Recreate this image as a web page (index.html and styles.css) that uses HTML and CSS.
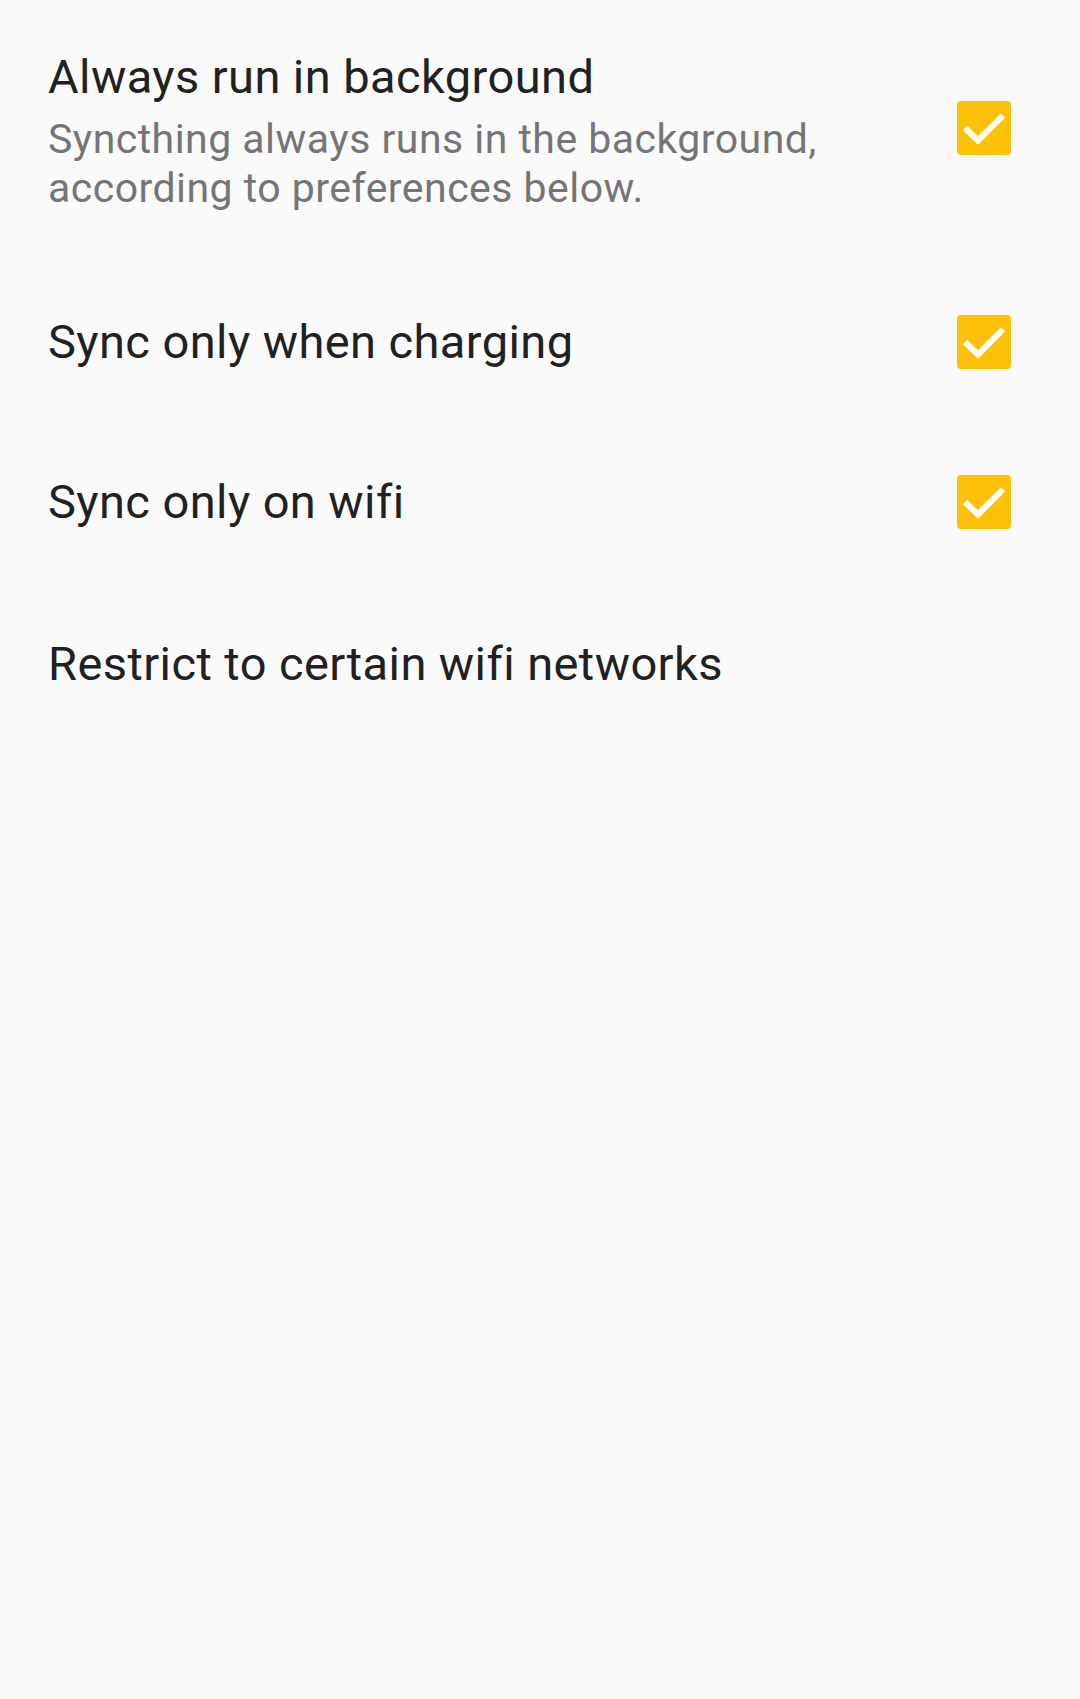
FILE: index.html
```html
<!DOCTYPE html>
<html lang="en">
<head>
<meta charset="utf-8">
<title>Run conditions</title>
<link rel="stylesheet" href="styles.css">
</head>
<body>
<div class="list">
  <div class="row row-first">
    <div class="text">
      <div class="title">Always run in background</div>
      <div class="summary">Syncthing always runs in the background,<br>according to preferences below.</div>
    </div>
    <div class="check check-first">
      <svg viewBox="0 0 54 54" width="54" height="54"><polyline points="8,27 21,39.5 46,14.5" fill="none" stroke="#fff" stroke-width="6"/></svg>
    </div>
  </div>
  <div class="row">
    <div class="text"><div class="title">Sync only when charging</div></div>
    <div class="check">
      <svg viewBox="0 0 54 54" width="54" height="54"><polyline points="8,27 21,39.5 46,14.5" fill="none" stroke="#fff" stroke-width="6"/></svg>
    </div>
  </div>
  <div class="row">
    <div class="text"><div class="title">Sync only on wifi</div></div>
    <div class="check">
      <svg viewBox="0 0 54 54" width="54" height="54"><polyline points="8,27 21,39.5 46,14.5" fill="none" stroke="#fff" stroke-width="6"/></svg>
    </div>
  </div>
  <div class="row row-last">
    <div class="text"><div class="title">Restrict to certain wifi networks</div></div>
  </div>
</div>
</body>
</html>
```
FILE: styles.css
```css
html, body {
  margin: 0;
  padding: 0;
  background: #fafafa;
}
body {
  width: 1080px;
  height: 1699px;
  font-family: Roboto, "Noto Sans", "Liberation Sans", sans-serif;
}
.list {
  display: flex;
  flex-direction: column;
}
.row {
  display: flex;
  align-items: center;
  padding: 52px 69px 52px 48px;
}
.row-first {
  padding-top: 49px;
  padding-bottom: 50px;
}
.row-last {
  padding-top: 54px;
}
.text {
  flex: 1;
}
.title {
  font-size: 47px;
  line-height: 56px;
  letter-spacing: 0.42px;
  color: #212121;
}
.summary {
  margin-top: 10px;
  font-size: 41px;
  line-height: 48.5px;
  letter-spacing: 0.47px;
  color: #757575;
}
.check {
  width: 54px;
  height: 54px;
  border-radius: 4px;
  background: #ffc107;
  flex: none;
}
.check svg {
  display: block;
}
.check-first {
  margin-bottom: 5px;
}
```
